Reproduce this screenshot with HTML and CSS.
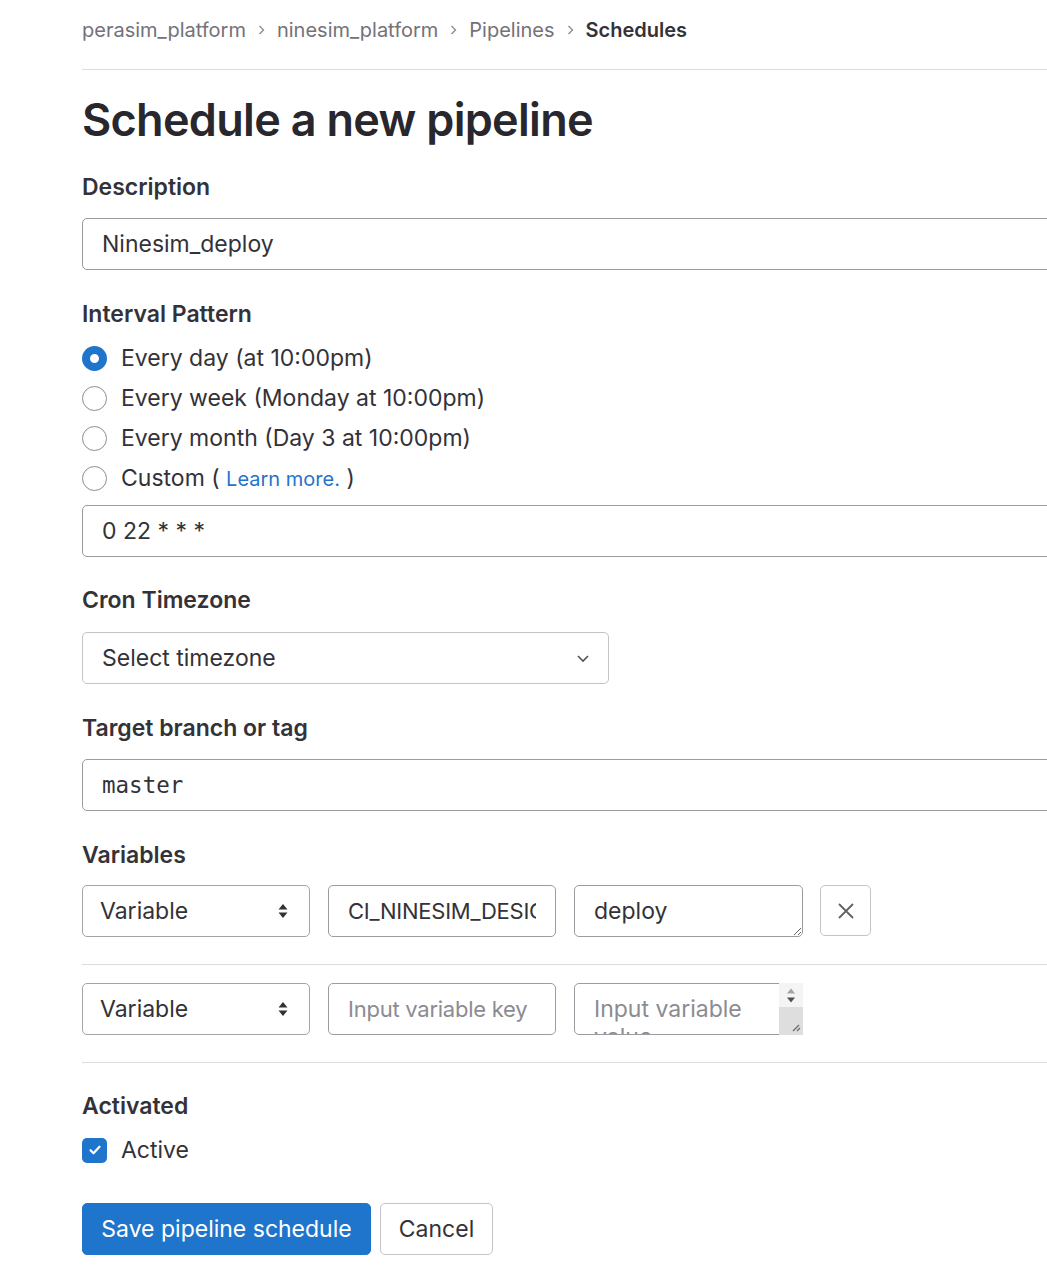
FILE: index.html
```html
<!DOCTYPE html>
<html lang="en">
<head>
<meta charset="utf-8">
<title>Schedule a new pipeline</title>
<link rel="stylesheet" href="styles.css">
</head>
<body>
<div class="page">
  <nav class="breadcrumb">
    <a class="crumb" href="#">perasim_platform</a>
    <svg class="sep" width="7" height="10" viewBox="0 0 7 10"><path d="M1.5 1l4 4-4 4" fill="none" stroke="#8a898f" stroke-width="1.3"/></svg>
    <a class="crumb" href="#">ninesim_platform</a>
    <svg class="sep" width="7" height="10" viewBox="0 0 7 10"><path d="M1.5 1l4 4-4 4" fill="none" stroke="#8a898f" stroke-width="1.3"/></svg>
    <a class="crumb" href="#">Pipelines</a>
    <svg class="sep" width="7" height="10" viewBox="0 0 7 10"><path d="M1.5 1l4 4-4 4" fill="none" stroke="#8a898f" stroke-width="1.3"/></svg>
    <span class="crumb current">Schedules</span>
  </nav>

  <h1 class="title">Schedule a new pipeline</h1>

  <form class="form">
    <div class="group first">
      <label class="label">Description</label>
      <input class="input" type="text" value="Ninesim_deploy">
    </div>

    <div class="group">
      <div class="label tight">Interval Pattern</div>
      <div class="radios">
        <label class="radio"><span class="dot checked"></span><span>Every day (at 10:00pm)</span></label>
        <label class="radio"><span class="dot"></span><span>Every week (Monday at 10:00pm)</span></label>
        <label class="radio"><span class="dot"></span><span>Every month (Day 3 at 10:00pm)</span></label>
        <label class="radio"><span class="dot"></span><span>Custom ( <a class="link" href="#">Learn more.</a> )</span></label>
      </div>
      <input class="input cron" type="text" value="0 22 * * *">
    </div>

    <div class="group g27">
      <label class="label mid">Cron Timezone</label>
      <div class="select tz">
        <span>Select timezone</span>
        <svg width="14" height="9" viewBox="0 0 14 9"><path d="M2 2l5 5 5-5" fill="none" stroke="#535158" stroke-width="1.6"/></svg>
      </div>
    </div>

    <div class="group">
      <label class="label">Target branch or tag</label>
      <input class="input mono" type="text" value="master">
    </div>

    <div class="group">
      <div class="label vars">Variables</div>
      <div class="var-row">
        <div class="select var-type">
          <span>Variable</span>
          <svg width="12" height="18" viewBox="0 0 12 18"><path d="M1.5 7.5L6 2l4.5 5.5z M1.5 10.5L6 16l4.5-5.5z" fill="#333238"/></svg>
        </div>
        <input class="input var-key" type="text" value="CI_NINESIM_DESIGNER">
        <textarea class="input var-value">deploy</textarea>
        <button class="remove" type="button" aria-label="Remove">
          <svg width="18" height="18" viewBox="0 0 18 18"><path d="M2 2l14 14M16 2L2 16" stroke="#626168" stroke-width="1.8" fill="none"/></svg>
        </button>
      </div>
      <div class="var-row">
        <div class="select var-type">
          <span>Variable</span>
          <svg width="12" height="18" viewBox="0 0 12 18"><path d="M1.5 7.5L6 2l4.5 5.5z M1.5 10.5L6 16l4.5-5.5z" fill="#333238"/></svg>
        </div>
        <input class="input var-key" type="text" placeholder="Input variable key">
        <div class="value-wrap">
          <textarea class="input var-value scrolled" placeholder="Input variable value"></textarea>
          <div class="scrollbar">
            <svg width="24" height="52" viewBox="0 0 24 52">
              <rect x="0" y="0" width="24" height="52" fill="#f4f4f4"/>
              <rect x="0" y="24" width="24" height="28" fill="#dedede"/>
              <path d="M8 10.5l4-5 4 5z" fill="#a3a3a3"/>
              <path d="M8 14.5l4 5 4-5z" fill="#505050"/>
              <path d="M14 48l6-6 M18 48l3-3" stroke="#6a6a6a" stroke-width="1.3" fill="none"/>
            </svg>
          </div>
        </div>
      </div>
    </div>

    <div class="group g27">
      <div class="label tight">Activated</div>
      <label class="radio">
        <span class="check">
          <svg width="14" height="12" viewBox="0 0 14 12"><path d="M2.5 6.2l3 3 6-6.5" fill="none" stroke="#fff" stroke-width="2.2" stroke-linecap="round" stroke-linejoin="round"/></svg>
        </span>
        <span>Active</span>
      </label>
    </div>

    <div class="actions">
      <button class="btn primary" type="button">Save pipeline schedule</button>
      <button class="btn default" type="button">Cancel</button>
    </div>
  </form>
</div>
</body>
</html>
```

FILE: styles.css
```css
html, body {
  margin: 0;
  padding: 0;
  background: #fff;
  overflow: hidden;
}

body {
  font-family: Inter, "Noto Sans", sans-serif;
  color: #333238;
  font-size: 23px;
}

.page {
  width: 1100px;
  padding: 14px 0 0 82px;
}

.breadcrumb {
  display: flex;
  align-items: center;
  gap: 12px;
  height: 32px;
  line-height: 32px;
  padding-bottom: 23px;
  border-bottom: 1px solid #dcdcde;
  font-size: 20px;
}

.crumb {
  color: #737278;
  text-decoration: none;
}

.crumb.current {
  color: #333238;
  font-weight: 600;
}

.sep {
  display: block;
}

.title {
  margin: 22px 0 0;
  font-size: 45px;
  line-height: 56px;
  font-weight: 600;
  letter-spacing: -0.7px;
  color: #28272d;
}

.form {
  margin: 0;
}

.group {
  margin-top: 28px;
}

.group.g27 {
  margin-top: 27px;
}

.group.first {
  margin-top: 23px;
}

.label {
  display: block;
  font-weight: 600;
  line-height: 32px;
  margin-bottom: 15px;
  color: #333238;
}

.label.tight {
  margin-bottom: 8px;
}

.label.mid {
  margin-bottom: 16px;
}

.label.vars {
  margin-bottom: 14px;
}

.input {
  display: block;
  box-sizing: border-box;
  width: 100%;
  height: 52px;
  margin: 0;
  padding: 0 19px;
  border: 1px solid #9c9ba1;
  border-radius: 5px;
  font-family: Inter, "Noto Sans", sans-serif;
  font-size: 23px;
  color: #333238;
  background: #fff;
  outline: none;
}

.input::placeholder {
  color: #8c8b91;
}

.input.mono {
  font-family: "DejaVu Sans Mono", "Liberation Mono", monospace;
  font-size: 22.5px;
}

.radios {
  display: flex;
  flex-direction: column;
  margin-bottom: 7px;
}

.radio {
  display: flex;
  align-items: center;
  gap: 14px;
  height: 40px;
  color: #333238;
}

.dot {
  box-sizing: border-box;
  width: 25px;
  height: 25px;
  border-radius: 50%;
  border: 1.5px solid #8d8c92;
  background: #fff;
  flex: none;
}

.dot.checked {
  border: 8px solid #1f75cb;
  background: #fff;
}

.link {
  color: #1f75cb;
  text-decoration: none;
  font-size: 20px;
}

.select {
  box-sizing: border-box;
  display: flex;
  align-items: center;
  justify-content: space-between;
  height: 52px;
  padding: 0 19px;
  border: 1px solid #a4a3a8;
  border-radius: 5px;
  background: #fff;
}

.select.tz {
  width: 527px;
  border-color: #c4c3c8;
  padding-right: 18px;
}

.select.tz svg {
  display: block;
}

.var-row {
  display: flex;
  align-items: flex-start;
  gap: 18px;
  padding-bottom: 27px;
  border-bottom: 1px solid #dcdcde;
}

.var-row + .var-row {
  padding-top: 18px;
}

.var-type {
  width: 228px;
  flex: none;
  padding-left: 17px;
  padding-right: 20px;
}

.var-type svg {
  display: block;
}

.var-key {
  width: 228px;
  flex: none;
  font-size: 22px;
  letter-spacing: -0.25px;
}

.var-value {
  width: 229px;
  flex: none;
  resize: both;
  padding: 11px 19px 0;
  line-height: 28px;
  overflow: hidden;
}

.value-wrap {
  position: relative;
  width: 229px;
  height: 52px;
  flex: none;
}

.var-value.scrolled {
  width: 229px;
  height: 52px;
  padding-right: 32px;
  resize: none;
}

.scrollbar {
  position: absolute;
  top: 0;
  right: 0;
  width: 24px;
  height: 52px;
}

.scrollbar svg {
  display: block;
}

.remove {
  box-sizing: border-box;
  width: 51px;
  height: 51px;
  margin-left: -1px;
  padding: 0;
  display: flex;
  align-items: center;
  justify-content: center;
  border: 1px solid #c4c3c8;
  border-radius: 5px;
  background: #fff;
}

.remove svg {
  display: block;
}

.check {
  box-sizing: border-box;
  width: 25px;
  height: 25px;
  border-radius: 5px;
  background: #1f75cb;
  display: flex;
  align-items: center;
  justify-content: center;
  flex: none;
}

.check svg {
  display: block;
}

.actions {
  display: flex;
  gap: 9px;
  margin-top: 33px;
}

.btn {
  box-sizing: border-box;
  height: 52px;
  padding: 0;
  border-radius: 5px;
  font-family: Inter, "Noto Sans", sans-serif;
  font-size: 23px;
  white-space: nowrap;
  cursor: pointer;
}

.btn.primary {
  width: 289px;
  background: #1f75cb;
  border: 1px solid #1f75cb;
  color: #fff;
}

.btn.default {
  width: 113px;
  background: #fff;
  border: 1px solid #c4c3c8;
  color: #333238;
}
```
